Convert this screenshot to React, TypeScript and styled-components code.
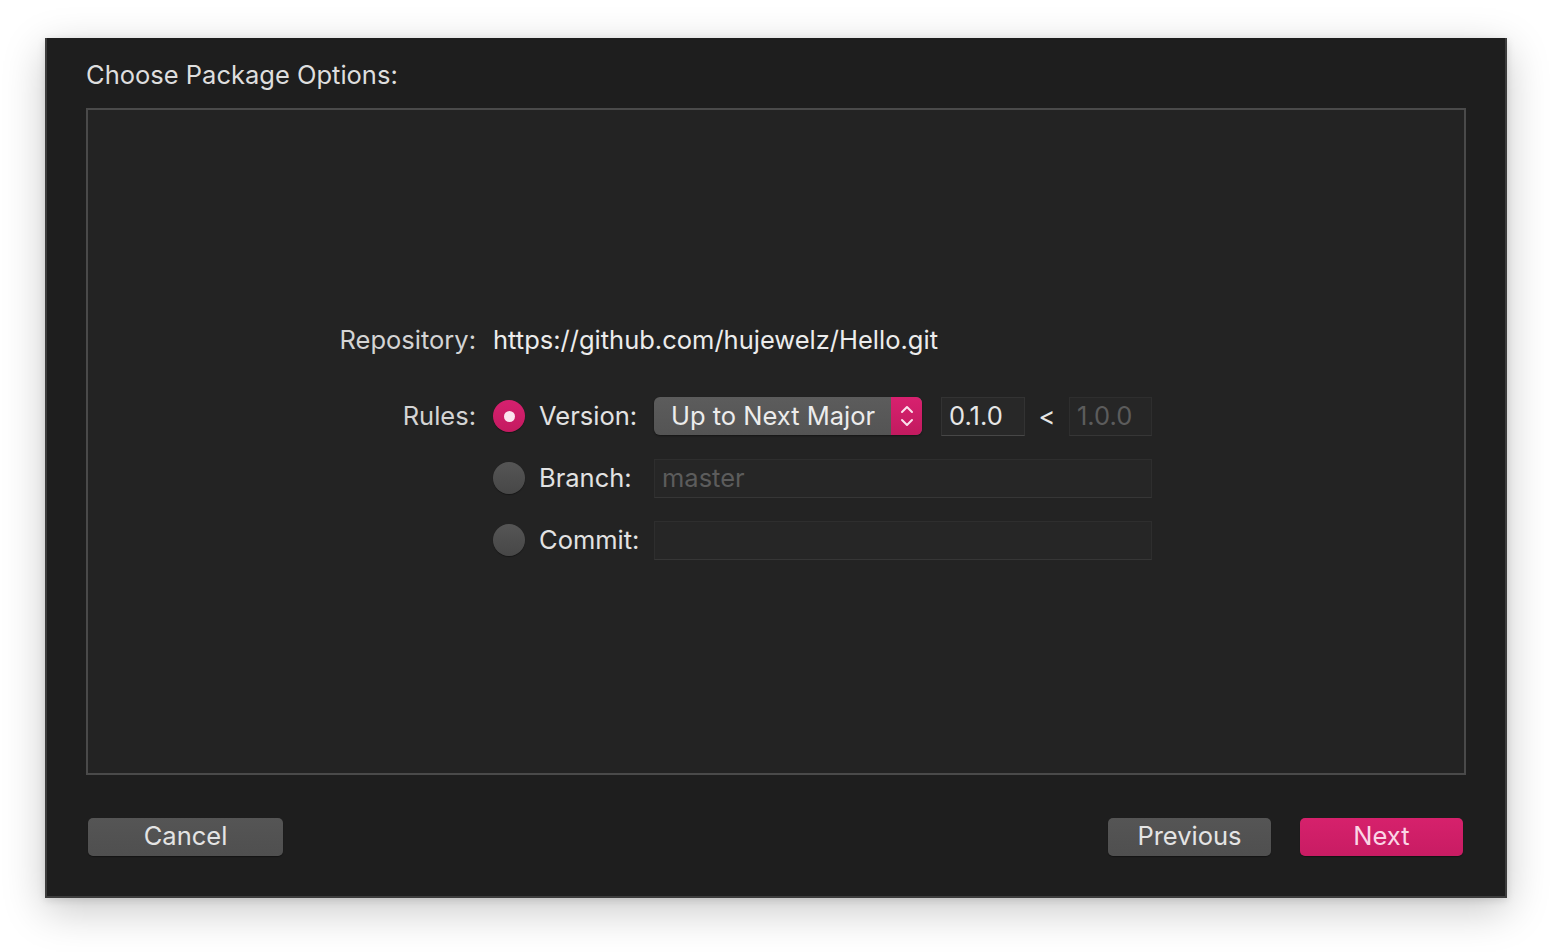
import styled, {createGlobalStyle} from 'styled-components';

const GlobalStyle = createGlobalStyle`
  html, body {
    margin: 0;
    padding: 0;
    background: #ffffff;
  }
  body {
    font-family: Inter, "Noto Sans", "Liberation Sans", sans-serif;
    -webkit-font-smoothing: antialiased;
  }
`;

const Page = styled.div`
  width: 1552px;
  height: 952px;
  padding: 38px 0 0 45px;
  box-sizing: border-box;
`;

const Sheet = styled.div`
  width: 1462px;
  height: 860px;
  box-sizing: border-box;
  background: #1e1e1e;
  border: 2px solid #3d3d3d;
  border-top: none;
  box-shadow: 0 12px 40px rgba(0, 0, 0, 0.22), 0 2px 8px rgba(0, 0, 0, 0.12);
  padding: 20px 39px 0 39px;
  display: flex;
  flex-direction: column;
`;

const Title = styled.h2`
  margin: 0;
  font-size: 25.5px;
  font-weight: 400;
  line-height: 34px;
  color: #dedede;
`;

const Panel = styled.div`
  margin-top: 16px;
  height: 667px;
  box-sizing: border-box;
  background: #232323;
  border: 2px solid #4a4a4a;
  display: flex;
  align-items: center;
`;

const Form = styled.div`
  display: grid;
  grid-template-columns: 388px auto;
  column-gap: 17px;
  row-gap: 24px;
  align-items: center;
  margin-top: -3px;
`;

const Label = styled.div<{ $top?: boolean }>`
  justify-self: end;
  align-self: ${p => (p.$top ? 'start' : 'center')};
  font-size: 25.5px;
  line-height: 38px;
  color: #d4d4d4;
`;

const Url = styled.div`
  font-size: 25.5px;
  line-height: 38px;
  color: #ececec;
  margin-bottom: 14px;
`;

const Rules = styled.div`
  display: grid;
  grid-template-columns: 32px 101px auto;
  column-gap: 14px;
  row-gap: 23px;
  align-items: center;
`;

const Radio = styled.span<{ $on?: boolean }>`
  width: 32px;
  height: 32px;
  border-radius: 50%;
  box-sizing: border-box;
  display: flex;
  align-items: center;
  justify-content: center;
  background: ${p => (p.$on
    ? 'linear-gradient(#d6206f, #c41a60)'
    : 'linear-gradient(#555555, #474747)')};
  box-shadow: 0 1px 1px rgba(0, 0, 0, 0.35);

  &::after {
    content: '';
    display: ${p => (p.$on ? 'block' : 'none')};
    width: 11px;
    height: 11px;
    border-radius: 50%;
    background: #fbe4ef;
  }
`;

const OptionLabel = styled.span`
  font-size: 25.5px;
  line-height: 38px;
  color: #e2e2e2;
  white-space: nowrap;
`;

const Controls = styled.div`
  display: flex;
  align-items: center;
`;

const Popup = styled.div`
  width: 268px;
  height: 38px;
  border-radius: 6px;
  background: linear-gradient(#5c5c5c, #545454);
  box-shadow: 0 1px 2px rgba(0, 0, 0, 0.4);
  display: flex;
  align-items: center;
  overflow: hidden;
`;

const PopupText = styled.span`
  flex: 1;
  padding-left: 17px;
  font-size: 25.5px;
  line-height: 36px;
  color: #ececec;
  white-space: nowrap;
`;

const PopupArrows = styled.span`
  width: 31px;
  height: 100%;
  background: linear-gradient(#d8216f, #c21a5f);
  display: flex;
  align-items: center;
  justify-content: center;
`;

const Field = styled.div<{ $width: number; $dim?: boolean }>`
  width: ${p => p.$width}px;
  height: 39px;
  box-sizing: border-box;
  background: ${p => (p.$dim ? '#262626' : '#282828')};
  border: 1px solid ${p => (p.$dim ? '#2e2e2e' : '#333333')};
  border-bottom-color: ${p => (p.$dim ? '#363636' : '#474747')};
  padding-left: 7px;
  font-size: 25.5px;
  line-height: 36px;
  color: ${p => (p.$dim ? '#5c5c5c' : '#e6e6e6')};
  white-space: nowrap;
`;

const Less = styled.span`
  width: 44px;
  text-align: center;
  font-size: 25.5px;
  line-height: 36px;
  color: #e6e6e6;
`;

const Footer = styled.div`
  margin-top: 43px;
  display: flex;
  align-items: center;
  gap: 29px;
  padding: 0 3px 0 2px;
`;

const Button = styled.button<{ $primary?: boolean; $width: number }>`
  width: ${p => p.$width}px;
  height: 38px;
  border: none;
  border-radius: 5px;
  font-family: inherit;
  font-size: 25.5px;
  line-height: 36px;
  padding: 0 0 2px;
  color: ${p => (p.$primary ? '#fbd6e6' : '#e4e4e4')};
  background: ${p => (p.$primary
    ? 'linear-gradient(#d6216c, #c81c63)'
    : 'linear-gradient(#555555, #4f4f4f)')};
  box-shadow: 0 1px 1px rgba(0, 0, 0, 0.35);
`;

const Spacer = styled.div`
  flex: 1;
`;

const Chevrons = () => (
    <svg width="16" height="26" viewBox="0 0 16 26" fill="none">
        <path d="M3 9 L8 4 L13 9" stroke="#fbe0ec" strokeWidth="2" strokeLinecap="round" strokeLinejoin="round"/>
        <path d="M3 17 L8 22 L13 17" stroke="#fbe0ec" strokeWidth="2" strokeLinecap="round" strokeLinejoin="round"/>
    </svg>
);

const App = () => {
    return (
        <Page>
            <GlobalStyle/>
            <Sheet>
                <Title>Choose Package Options:</Title>
                <Panel>
                    <Form>
                        <Label $top>Repository:</Label>
                        <Url>https://github.com/hujewelz/Hello.git</Url>
                        <Label $top>Rules:</Label>
                        <Rules>
                            <Radio $on/>
                            <OptionLabel>Version:</OptionLabel>
                            <Controls>
                                <Popup>
                                    <PopupText>Up to Next Major</PopupText>
                                    <PopupArrows><Chevrons/></PopupArrows>
                                </Popup>
                                <Field $width={84} style={{marginLeft: 19}}>0.1.0</Field>
                                <Less>&lt;</Less>
                                <Field $width={83} $dim>1.0.0</Field>
                            </Controls>
                            <Radio/>
                            <OptionLabel>Branch:</OptionLabel>
                            <Controls>
                                <Field $width={498} $dim>master</Field>
                            </Controls>
                            <Radio/>
                            <OptionLabel>Commit:</OptionLabel>
                            <Controls>
                                <Field $width={498} $dim/>
                            </Controls>
                        </Rules>
                    </Form>
                </Panel>
                <Footer>
                    <Button $width={195}>Cancel</Button>
                    <Spacer/>
                    <Button $width={163}>Previous</Button>
                    <Button $width={163} $primary>Next</Button>
                </Footer>
            </Sheet>
        </Page>
    );
};

export default App;
